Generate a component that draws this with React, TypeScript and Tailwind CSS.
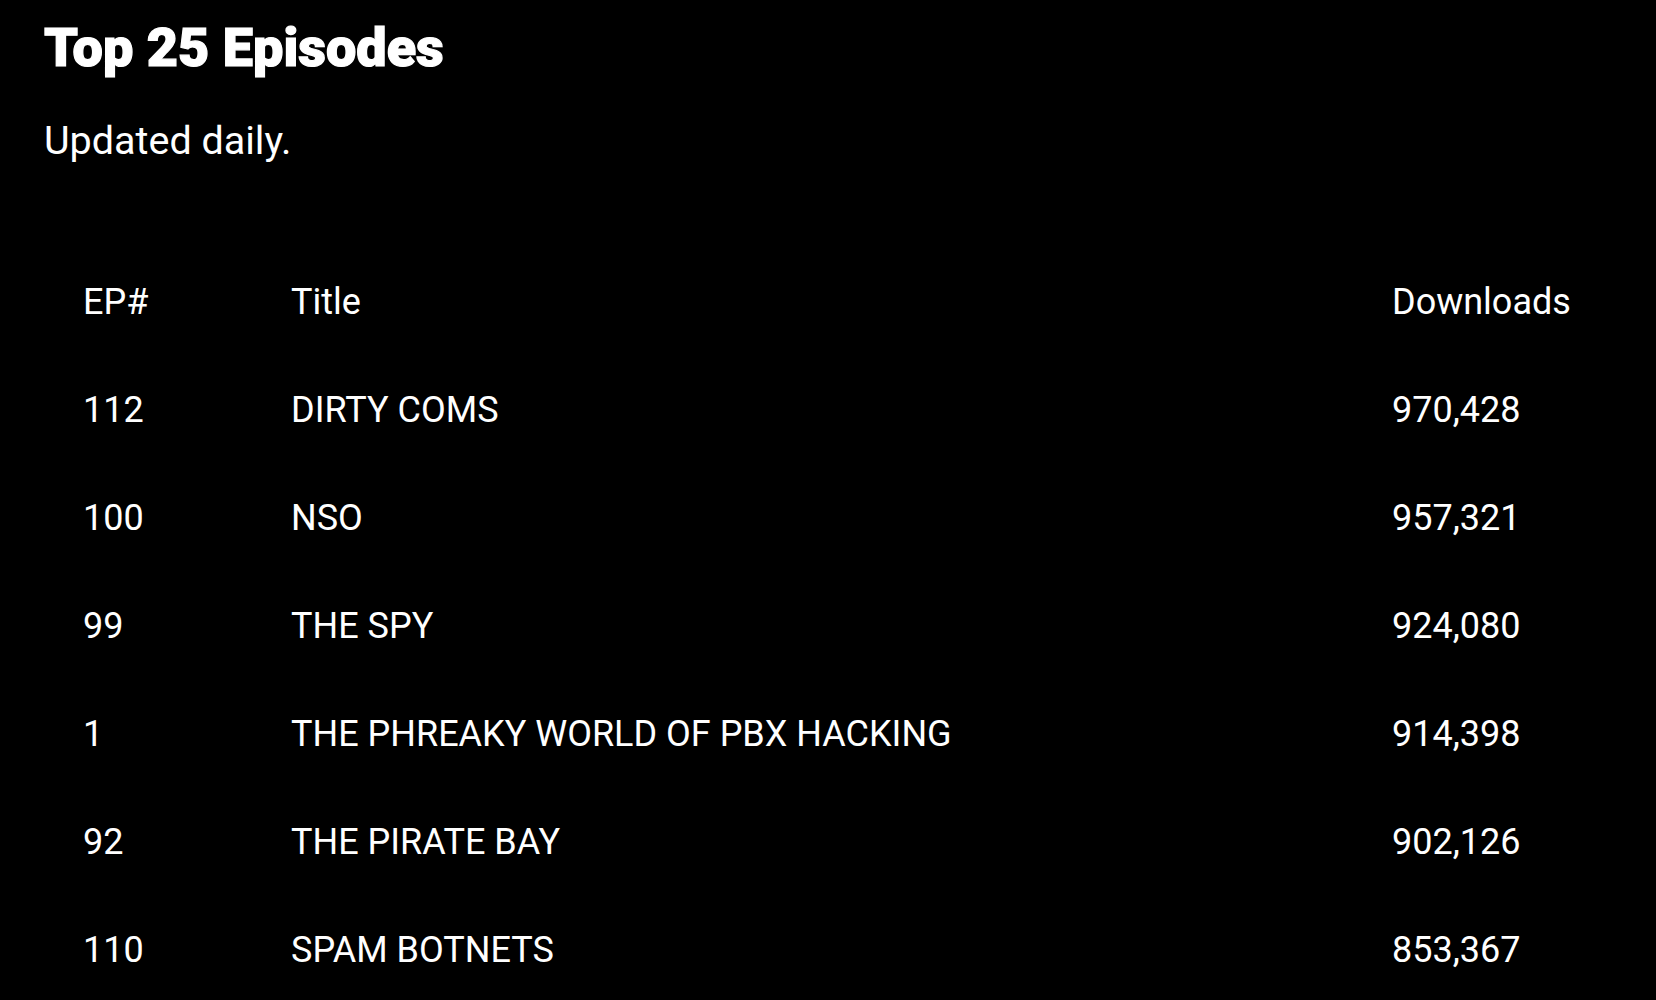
const episodes = [
  { ep: "112", title: "DIRTY COMS", downloads: "970,428" },
  { ep: "100", title: "NSO", downloads: "957,321" },
  { ep: "99", title: "THE SPY", downloads: "924,080" },
  { ep: "1", title: "THE PHREAKY WORLD OF PBX HACKING", downloads: "914,398" },
  { ep: "92", title: "THE PIRATE BAY", downloads: "902,126" },
  { ep: "110", title: "SPAM BOTNETS", downloads: "853,367" },
];

export default function App() {
  return (
    <div className="h-screen overflow-hidden bg-black px-[44px] pt-[21px] text-white [font-family:Roboto,'Noto_Sans',sans-serif]">
      <h1 className="text-[54px] font-black leading-none [-webkit-text-stroke:1.2px_white]">Top 25 Episodes</h1>
      <p className="mt-[42px] text-[39.5px] leading-[48px]">Updated daily.</p>
      <table className="mt-[83px] w-full border-collapse text-left text-[36px]">
        <thead>
          <tr className="h-[108px]">
            <th className="w-[247px] pl-[39px] font-normal">EP#</th>
            <th className="font-normal">Title</th>
            <th className="w-[220px] font-normal">Downloads</th>
          </tr>
        </thead>
        <tbody>
          {episodes.map((row) => (
            <tr key={row.ep} className="h-[108px]">
              <td className="pl-[39px]">{row.ep}</td>
              <td>{row.title}</td>
              <td>{row.downloads}</td>
            </tr>
          ))}
        </tbody>
      </table>
    </div>
  );
}
